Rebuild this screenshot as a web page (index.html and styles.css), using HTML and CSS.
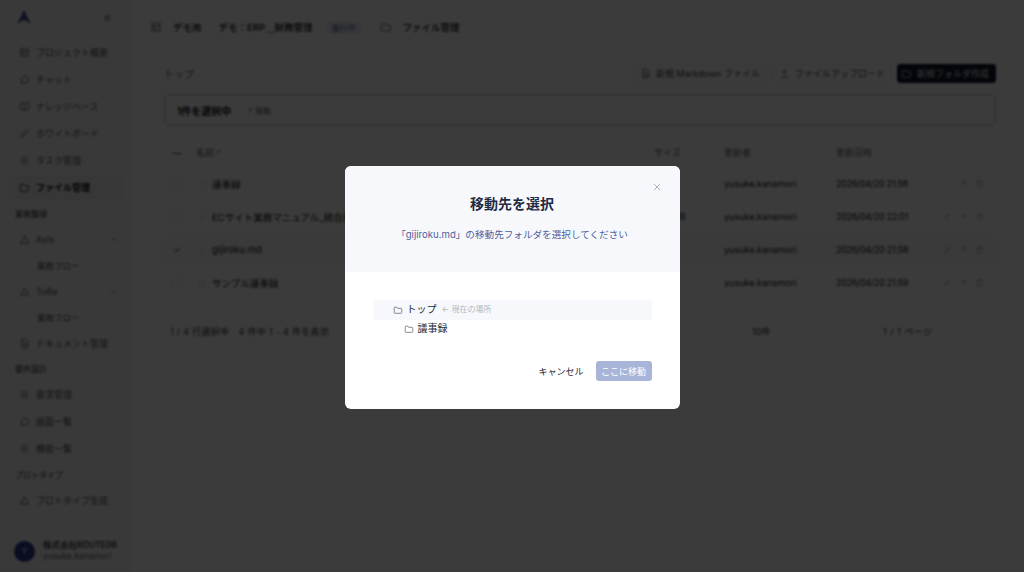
FILE: index.html
```html
<!DOCTYPE html>
<html lang="ja">
<head>
    <meta charset="UTF-8">
    <meta name="viewport" content="width=device-width, initial-scale=1.0">
    <title>ファイル管理</title>
    <link rel="stylesheet" href="styles.css">
</head>
<body>
    <svg class="defs" width="0" height="0">
        <symbol id="i-folder" viewBox="0 0 24 24"><path d="M3 7a2 2 0 0 1 2-2h4l2 3h8a2 2 0 0 1 2 2v8a2 2 0 0 1-2 2H5a2 2 0 0 1-2-2z"/></symbol>
        <symbol id="i-chat" viewBox="0 0 24 24"><path d="M21 12a8 8 0 0 1-12 7l-5 1 1.500-4.500A8 8 0 1 1 21 12z"/></symbol>
        <symbol id="i-book" viewBox="0 0 24 24"><path d="M12 6c-2-1.500-5-2-9-2v15c4 0 7 .5 9 2 2-1.500 5-2 9-2V4c-4 0-7 .5-9 2zM12 6v15"/></symbol>
        <symbol id="i-pen" viewBox="0 0 24 24"><path d="M4 20l1-5L16 4l4 4L9 19z"/></symbol>
        <symbol id="i-list" viewBox="0 0 24 24"><path d="M4 6h16M4 12h16M4 18h16"/></symbol>
        <symbol id="i-box" viewBox="0 0 24 24"><path d="M4 4h16v16H4zM4 10h16M10 10v10"/></symbol>
        <symbol id="i-tri" viewBox="0 0 24 24"><path d="M12 4l9 16H3z"/></symbol>
        <symbol id="i-doc" viewBox="0 0 24 24"><path d="M6 3h9l4 4v14H6zM9 12h7M9 16h7"/></symbol>
        <symbol id="i-up" viewBox="0 0 24 24"><path d="M12 16V5M7 10l5-5 5 5M4 20h16"/></symbol>
        <symbol id="i-trash" viewBox="0 0 24 24"><path d="M4 7h16M9 7V4h6v3M6 7l1 14h10l1-14"/></symbol>
        <symbol id="i-arrow" viewBox="0 0 24 24"><path d="M7 17L17 7M9 7h8v8"/></symbol>
        <symbol id="i-edit" viewBox="0 0 24 24"><path d="M5 19l1-4L16 5l3 3L9 18z"/></symbol>
        <symbol id="i-close" viewBox="0 0 24 24"><path d="M5 5l14 14M19 5L5 19"/></symbol>
    </svg>

    <div class="app">
        <aside class="sidebar">
            <div class="brand">
                <svg class="logo" viewBox="0 0 24 24"><path d="M12 1L22 22 12 16 2 22z"/></svg>
                <span class="collapse">«</span>
            </div>
            <nav class="nav">
                <a class="nav-item"><svg class="icon"><use href="#i-box"/></svg>プロジェクト概要</a>
                <a class="nav-item"><svg class="icon"><use href="#i-chat"/></svg>チャット</a>
                <a class="nav-item"><svg class="icon"><use href="#i-book"/></svg>ナレッジベース</a>
                <a class="nav-item"><svg class="icon"><use href="#i-pen"/></svg>ホワイトボード</a>
                <a class="nav-item"><svg class="icon"><use href="#i-list"/></svg>タスク管理</a>
                <a class="nav-item active"><svg class="icon"><use href="#i-folder"/></svg>ファイル管理</a>
                <div class="nav-section">業務整理</div>
                <a class="nav-item tight"><svg class="icon"><use href="#i-tri"/></svg>AsIs<span class="caret">⌃</span></a>
                <a class="nav-item tight sub">業務フロー</a>
                <a class="nav-item tight"><svg class="icon"><use href="#i-tri"/></svg>ToBe<span class="caret">⌃</span></a>
                <a class="nav-item tight sub">業務フロー</a>
                <a class="nav-item tight"><svg class="icon"><use href="#i-doc"/></svg>ドキュメント管理</a>
                <div class="nav-section">要件設計</div>
                <a class="nav-item"><svg class="icon"><use href="#i-list"/></svg>要求管理</a>
                <a class="nav-item"><svg class="icon"><use href="#i-chat"/></svg>画面一覧</a>
                <a class="nav-item"><svg class="icon"><use href="#i-list"/></svg>機能一覧</a>
                <div class="nav-section">プロトタイプ</div>
                <a class="nav-item"><svg class="icon"><use href="#i-tri"/></svg>プロトタイプ生成</a>
            </nav>
            <div class="account">
                <div class="avatar">Y</div>
                <div>
                    <div class="account-name">株式会社ROUTE06</div>
                    <div class="account-mail">yusuke.kanamori</div>
                </div>
            </div>
        </aside>

        <main class="main">
            <header class="topbar">
                <svg class="icon"><use href="#i-box"/></svg>
                <span class="crumb">デモ用</span>
                <span class="crumb">デモ：ERP＿財務管理</span>
                <span class="badge">進行中</span>
                <svg class="icon page-icon"><use href="#i-folder"/></svg>
                <span class="crumb">ファイル管理</span>
            </header>

            <div class="content">
                <div class="toolbar">
                    <span class="path">トップ</span>
                    <div class="actions">
                        <button class="btn"><svg class="icon"><use href="#i-doc"/></svg>新規 Markdown ファイル</button>
                        <button class="btn"><svg class="icon"><use href="#i-up"/></svg>ファイルアップロード</button>
                        <button class="btn primary"><svg class="icon"><use href="#i-folder"/></svg>新規フォルダ作成</button>
                    </div>
                </div>

                <div class="selection-bar">
                    <strong>1件を選択中</strong>
                    <span class="move"><svg class="icon"><use href="#i-arrow"/></svg>移動</span>
                </div>

                <div class="row head">
                    <span class="check">—</span>
                    <span>名前 ^</span>
                    <span>サイズ</span>
                    <span>更新者</span>
                    <span>更新日時</span>
                    <span></span>
                </div>
                <div class="row">
                    <span class="check"><i class="box"></i></span>
                    <span class="name"><svg class="icon"><use href="#i-folder"/></svg>議事録</span>
                    <span></span>
                    <span>yusuke.kanamori</span>
                    <span class="date">2026/04/20 21:56</span>
                    <span class="row-actions"><svg class="icon"><use href="#i-arrow"/></svg><svg class="icon"><use href="#i-trash"/></svg></span>
                </div>
                <div class="row">
                    <span class="check"><i class="box"></i></span>
                    <span class="name"><svg class="icon"><use href="#i-doc"/></svg>ECサイト業務マニュアル_統合版.md</span>
                    <span>12.5 KB</span>
                    <span>yusuke.kanamori</span>
                    <span class="date">2026/04/20 22:01</span>
                    <span class="row-actions"><svg class="icon"><use href="#i-edit"/></svg><svg class="icon"><use href="#i-arrow"/></svg><svg class="icon"><use href="#i-trash"/></svg></span>
                </div>
                <div class="row selected">
                    <span class="check">✓</span>
                    <span class="name"><svg class="icon"><use href="#i-doc"/></svg>gijiroku.md</span>
                    <span>845 B</span>
                    <span>yusuke.kanamori</span>
                    <span class="date">2026/04/20 21:58</span>
                    <span class="row-actions"><svg class="icon"><use href="#i-edit"/></svg><svg class="icon"><use href="#i-arrow"/></svg><svg class="icon"><use href="#i-trash"/></svg></span>
                </div>
                <div class="row">
                    <span class="check"><i class="box"></i></span>
                    <span class="name"><svg class="icon"><use href="#i-doc"/></svg>サンプル議事録</span>
                    <span>812 B</span>
                    <span>yusuke.kanamori</span>
                    <span class="date">2026/04/20 21:59</span>
                    <span class="row-actions"><svg class="icon"><use href="#i-edit"/></svg><svg class="icon"><use href="#i-arrow"/></svg><svg class="icon"><use href="#i-trash"/></svg></span>
                </div>

                <div class="pager">
                    <span class="pager-info">1 / 4 行選択中　4 件中 1 - 4 件を表示</span>
                    <span class="pager-size">10件</span>
                    <span class="pager-page">1 / 1 ページ</span>
                </div>
            </div>
        </main>
    </div>

    <div class="overlay">
        <div class="modal">
            <div class="modal-head">
                <svg class="modal-close"><use href="#i-close"/></svg>
                <h2>移動先を選択</h2>
                <p>「gijiroku.md」の移動先フォルダを選択してください</p>
            </div>
            <div class="modal-body">
                <div class="tree-row current">
                    <svg class="tree-icon"><use href="#i-folder"/></svg>
                    <span>トップ</span>
                    <small>← 現在の場所</small>
                </div>
                <div class="tree-row child">
                    <svg class="tree-icon"><use href="#i-folder"/></svg>
                    <span>議事録</span>
                </div>
                <div class="modal-actions">
                    <button class="cancel">キャンセル</button>
                    <button class="submit">ここに移動</button>
                </div>
            </div>
        </div>
    </div>
</body>
</html>
```

FILE: styles.css
```css
* {
    box-sizing: border-box;
}

body {
    margin: 0;
    height: 572px;
    overflow: hidden;
    background: #fff;
    color: #111827;
    font-family: Inter, "Noto Sans CJK JP", sans-serif;
    font-size: 9px;
}

.defs {
    position: absolute;
}

.icon {
    width: 11px;
    height: 11px;
    flex: none;
    fill: none;
    stroke: currentColor;
    stroke-width: 1.8;
}

.app {
    display: flex;
    height: 572px;
}

/* sidebar */
.sidebar {
    width: 132px;
    flex: none;
    display: flex;
    flex-direction: column;
    background: #f6f6f6;
    border-right: 1px solid #eee;
    padding: 0 8px;
}

.brand {
    height: 39px;
    display: flex;
    align-items: center;
    justify-content: space-between;
    padding: 0 12px 5px 8px;
}

.logo {
    width: 16px;
    height: 16px;
    fill: #3f4f8f;
}

.collapse {
    font-size: 13px;
    color: #777;
}

.nav-item {
    height: 27px;
    display: flex;
    align-items: center;
    gap: 6px;
    padding-left: 11px;
    border-radius: 4px;
    color: #555;
    white-space: nowrap;
}

.nav-item.tight {
    height: 26px;
}

.nav-item.active {
    background: #eee;
    color: #111;
    font-weight: 700;
}

.nav-item.sub {
    padding-left: 29px;
    font-size: 8.500px;
}

.caret {
    margin-left: auto;
    margin-right: 6px;
    padding-top: 4px;
    color: #999;
}

.nav-section {
    height: 25px;
    display: flex;
    align-items: center;
    padding-left: 7px;
    font-size: 8px;
    color: #333;
}

.account {
    margin-top: auto;
    height: 42px;
    display: flex;
    align-items: center;
    gap: 8px;
    padding: 0 6px 0;
}

.avatar {
    width: 21px;
    height: 21px;
    flex: none;
    display: flex;
    align-items: center;
    justify-content: center;
    border-radius: 50%;
    background: #2b3a8c;
    color: #fff;
    font-size: 8px;
}

.account-name {
    font-size: 8.500px;
    font-weight: 500;
    line-height: 11px;
    white-space: nowrap;
}

.account-mail {
    font-size: 8.500px;
    line-height: 11px;
    color: #666;
}

/* main */
.main {
    flex: 1;
    min-width: 0;
}

.topbar {
    height: 54px;
    display: flex;
    align-items: center;
    gap: 6px;
    padding-left: 18px;
    color: #555;
}

.topbar > .icon {
    width: 12px;
    height: 12px;
}

.crumb {
    margin-left: 5px;
    margin-right: 6px;
    font-size: 9.500px;
    font-weight: 500;
    color: #111;
}

.badge {
    margin-left: 2px;
    padding: 1px 5px;
    border-radius: 3px;
    background: #eef0fa;
    color: #4b5aa8;
    font-size: 8px;
}

.topbar > .page-icon {
    margin-left: 13px;
}

.content {
    padding: 0 28px 0 32px;
}

.toolbar {
    height: 40px;
    display: flex;
    align-items: center;
    justify-content: space-between;
    padding-bottom: 2px;
}

.path {
    font-size: 10px;
    color: #666;
}

.actions {
    display: flex;
    gap: 5px;
}

.btn {
    height: 19px;
    display: flex;
    align-items: center;
    gap: 5px;
    padding: 0 6px;
    border: 1px solid #f0f0f0;
    border-radius: 3px;
    background: #fff;
    color: #444;
    font: inherit;
}

.btn.primary {
    padding-left: 3px;
    background: #0f172a;
    border-color: #0f172a;
    color: #e5e7eb;
}

.selection-bar {
    height: 32px;
    display: flex;
    align-items: center;
    gap: 8px;
    padding-left: 12px;
    border: 1px solid #b8bccb;
    border-radius: 6px;
}

.selection-bar strong {
    font-size: 10px;
}

.move {
    display: flex;
    align-items: center;
    gap: 1px;
    padding: 0 8px 0 5px;
    border-left: 1px solid #eee;
    border-right: 1px solid #eee;
    font-size: 8px;
    color: #666;
}

.move .icon {
    width: 9px;
    height: 9px;
}

.row {
    height: 33px;
    display: grid;
    grid-template-columns: 32px 458px 70px 112px 110px 50px;
    align-items: center;
}

.row.head {
    height: 30px;
    margin-top: 11px;
    color: #666;
}

.row.selected {
    background: #f6faf6;
}

.check {
    display: flex;
    justify-content: center;
    padding-right: 6px;
    color: #333;
}

.box {
    width: 10px;
    height: 10px;
    border: 1px solid #e5e7eb;
    border-radius: 2px;
}

.name {
    display: flex;
    align-items: center;
    gap: 5px;
    padding-left: 1px;
    font-size: 9.500px;
    color: #111;
    white-space: nowrap;
}

.name .icon {
    width: 10px;
    height: 10px;
    color: #ddd;
}

.date {
    letter-spacing: -0.300px;
}

.row-actions {
    display: flex;
    justify-content: flex-end;
    gap: 7px;
    margin-left: -20px;
    padding-right: 12px;
    color: #999;
}

.row-actions .icon {
    width: 9px;
    height: 9px;
}

.pager {
    height: 32px;
    margin-top: 16px;
    display: flex;
    align-items: center;
    padding-left: 6px;
    color: #333;
}

.pager-info {
    width: 582px;
    letter-spacing: 0.300px;
}

.pager-size {
    width: 131px;
}

.pager-page {
    letter-spacing: 0.500px;
}

/* dialog */
.overlay {
    position: fixed;
    inset: 0;
    display: flex;
    align-items: flex-start;
    justify-content: center;
    padding-top: 166px;
    background: rgba(0, 0, 0, 0.77);
    backdrop-filter: blur(1px);
}

.modal {
    width: 335px;
    height: 243px;
    border-radius: 6px;
    background: #fff;
    overflow: hidden;
}

.modal-head {
    position: relative;
    height: 106px;
    padding-top: 27px;
    background: #f6f8fc;
    text-align: center;
}

.modal-close {
    position: absolute;
    top: 16px;
    right: 18px;
    width: 10px;
    height: 10px;
    fill: none;
    stroke: #9ca3af;
    stroke-width: 2;
}

.modal-head h2 {
    margin: 0;
    font-size: 14px;
    line-height: 21px;
    color: #1f2a44;
}

.modal-head p {
    margin: 14px 0 0;
    font-size: 9.600px;
    line-height: 14px;
    color: #4f5e9e;
}

.modal-body {
    padding: 28px 28px 0;
}

.tree-row {
    height: 20px;
    display: flex;
    align-items: center;
    gap: 4px;
    padding-left: 20px;
    font-size: 10px;
    color: #1f2937;
}

.tree-row span,
.tree-row small {
    margin-bottom: 4px;
}

.tree-row.current {
    background: #f6f8fb;
    border-radius: 3px;
}

.tree-row.child {
    margin-top: -1px;
    padding-left: 31px;
}

.tree-row small {
    margin-left: 1px;
    font-size: 8px;
    color: #b4b8c2;
}

.tree-icon {
    width: 10px;
    height: 10px;
    fill: none;
    stroke: #4b5563;
    stroke-width: 1.600;
}

.modal-actions {
    margin-top: 22px;
    display: flex;
    justify-content: flex-end;
    align-items: center;
    gap: 12px;
}

.modal-actions button {
    height: 20px;
    padding: 0;
    border: none;
    border-radius: 3px;
    font: inherit;
}

.cancel {
    background: none;
    color: #1f2937;
}

.submit {
    width: 56px;
    background: #a9b5d8;
    color: #fff;
}
```
